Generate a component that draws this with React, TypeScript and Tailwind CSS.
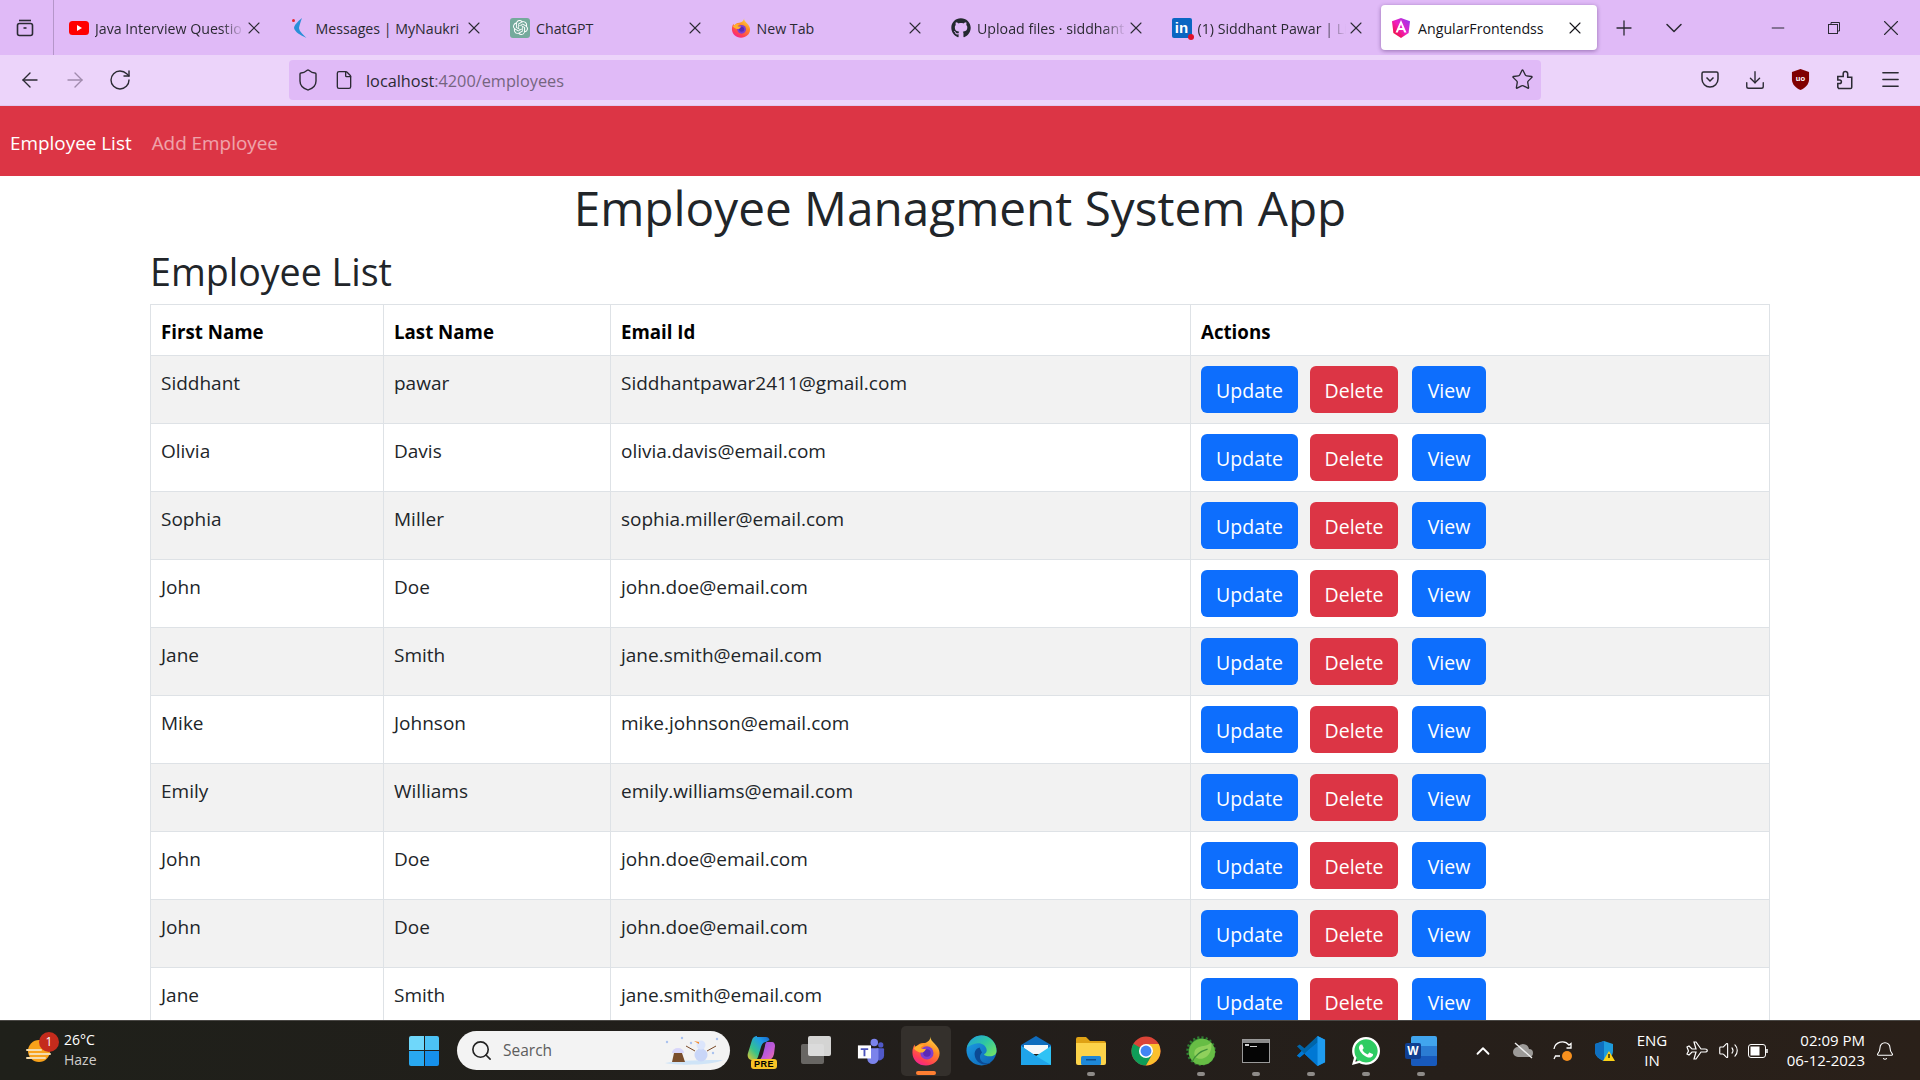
import { useId } from "react";
import {
  ArrowLeft,
  ArrowRight,
  ChevronDown,
  ChevronUp,
  Bell,
  Download,
  Menu,
  Minus,
  Plus,
  RotateCw,
  Search,
  Shield,
  Star,
  Volume2,
  X,
  File,
} from "lucide-react";
import { FaGithub, FaWhatsapp } from "react-icons/fa";
import { SiOpenai } from "react-icons/si";

const employees = [
  ["Siddhant", "pawar", "Siddhantpawar2411@gmail.com"],
  ["Olivia", "Davis", "olivia.davis@email.com"],
  ["Sophia", "Miller", "sophia.miller@email.com"],
  ["John", "Doe", "john.doe@email.com"],
  ["Jane", "Smith", "jane.smith@email.com"],
  ["Mike", "Johnson", "mike.johnson@email.com"],
  ["Emily", "Williams", "emily.williams@email.com"],
  ["John", "Doe", "john.doe@email.com"],
  ["John", "Doe", "john.doe@email.com"],
  ["Jane", "Smith", "jane.smith@email.com"],
];

function Firefox({ size = 20 }: { size?: number }) {
  const id = useId();
  return (
    <svg width={size} height={size} viewBox="0 0 32 32">
      <defs>
        <linearGradient id={id} x1="0.8" y1="0" x2="0.25" y2="1">
          <stop offset="0" stopColor="#ffe04a" />
          <stop offset="0.4" stopColor="#ff8a26" />
          <stop offset="0.8" stopColor="#ff3d56" />
          <stop offset="1" stopColor="#f0209a" />
        </linearGradient>
      </defs>
      <path
        d="M21 .5c-.5 3 1.500 5 4 7.500 3.500 3.500 5.500 6.500 5.500 10.500C30.500 26 24 31.500 16 31.500S1.500 25.500 1.500 17.500c0-3.500 1-6.500 2.500-8.500 0 1.500.5 2.500 1.500 3.500C7 9 10 7.500 13 7.500c4 0 7.500-2.500 8-7z"
        fill={`url(#${id})`}
      />
      <circle cx="17" cy="18" r="7" fill="#7d3fd1" />
      <circle cx="17" cy="18" r="4" fill="#5a2ab5" />
      <path d="M3 13c2.500-3 7-4.500 11-3.500-2 .8-3.500 2-3.500 3.500 1.500.8 3.500 1 5.500.5-1.500 4-5 5-8 3.500-2-1-4-2-5-4z" fill="#ffb02e" />
    </svg>
  );
}

function YouTubeIcon() {
  return (
    <svg width="20" height="20" viewBox="0 0 20 20">
      <rect x="0" y="3" width="20" height="14" rx="3.5" fill="#f00" />
      <path d="M8 7l5 3-5 3z" fill="#fff" />
    </svg>
  );
}

function NaukriIcon() {
  return (
    <svg width="20" height="20" viewBox="0 0 20 20">
      <circle cx="3.500" cy="2.500" r="1.500" fill="#e8262b" />
      <path d="M12 0C7 4 4.500 7 4 10c1 4 6 7 12.500 10C11.500 15 9.500 13 9 10c.5-3 1.500-6 3-10z" fill="#2a8fd8" />
    </svg>
  );
}

function ChatGptIcon() {
  return (
    <span className="flex h-5 w-5 items-center justify-center rounded-[3px] bg-[#74aa9c]">
      <SiOpenai size={15} color="#fff" />
    </span>
  );
}

function LinkedInIcon() {
  return (
    <span className="relative flex h-5 w-5 items-center justify-center rounded-[2px] bg-[#0a66c2] font-['Liberation_Sans',sans-serif] text-[15px] leading-none font-bold text-white">
      in
      <span className="absolute -right-[2px] -bottom-[2px] h-[6px] w-[6px] rounded-full bg-[#e0102a]" />
    </span>
  );
}

function AngularIcon() {
  const id = useId();
  return (
    <svg width="20" height="20" viewBox="0 0 20 20">
      <defs>
        <linearGradient id={id} x1="0" y1="1" x2="1" y2="0">
          <stop offset="0" stopColor="#f0060b" />
          <stop offset="0.5" stopColor="#f020c0" />
          <stop offset="1" stopColor="#8a3cf4" />
        </linearGradient>
      </defs>
      <path d="M10 0l9 3.200-1.400 11.800L10 20l-7.600-5L1 3.200z" fill={`url(#${id})`} />
      <path
        fillRule="evenodd"
        d="M10 2L4.500 14.500h2.300l1-2.500h4.400l1 2.500h2.300zM10 6.500l1.400 3.500H8.600z"
        fill="#fff"
      />
    </svg>
  );
}

const tabs = [
  { title: "Java Interview Questio", icon: <YouTubeIcon />, fade: true },
  { title: "Messages | MyNaukri", icon: <NaukriIcon /> },
  { title: "ChatGPT", icon: <ChatGptIcon /> },
  { title: "New Tab", icon: <Firefox /> },
  { title: "Upload files · siddhant", icon: <FaGithub size={20} color="#24292f" />, fade: true },
  { title: "(1) Siddhant Pawar | Li", icon: <LinkedInIcon />, fade: true },
];

function BrowserTab({ title, icon, fade }: { title: string; icon: React.ReactNode; fade?: boolean }) {
  return (
    <div className="flex h-[55px] w-[220.5px] shrink-0 items-center pr-[12px] pl-[14px]">
      <span className="flex h-5 w-5 shrink-0 items-center justify-center">{icon}</span>
      <span
        className={
          fade
            ? "ml-[6px] min-w-0 flex-1 overflow-hidden pt-[2px] text-[14.2px] whitespace-nowrap text-[#2b2a33] [mask-image:linear-gradient(to_right,black_85%,transparent)]"
            : "ml-[6px] min-w-0 flex-1 overflow-hidden pt-[2px] text-[14.2px] whitespace-nowrap text-[#2b2a33]"
        }
      >
        {title}
      </span>
      <X size={20} strokeWidth={1.3} className="shrink-0 text-[#2b2a33]" />
    </div>
  );
}

function TabBar() {
  return (
    <div className="flex h-[55px] items-center bg-[#e0baf7]">
      <div className="mr-[1px] flex h-full w-[54px] shrink-0 items-center justify-center border-r border-[#b596c9] pr-[3px]">
        <svg width="20" height="20" viewBox="0 0 20 20" fill="none" stroke="#2b2a33" strokeWidth="1.6">
          <path d="M4 2.500h12" />
          <rect x="2.500" y="5.500" width="15" height="12" rx="2" />
          <path d="M8.500 10h3" />
        </svg>
      </div>
      {tabs.map((tab) => (
        <BrowserTab key={tab.title} {...tab} />
      ))}
      <div className="ml-[3px] flex h-[45px] w-[216px] shrink-0 items-center rounded-[4px] bg-white pr-[12px] pl-[10px] shadow-[0_1px_4px_rgba(60,20,90,0.45)]">
        <AngularIcon />
        <span className="ml-[7px] flex-1 pt-[2px] text-[14.2px] whitespace-nowrap text-[#15141a]">AngularFrontendss</span>
        <X size={20} strokeWidth={1.3} className="text-[#15141a]" />
      </div>
      <Plus size={24} strokeWidth={1.3} className="ml-[15px] shrink-0 text-[#2b2a33]" />
      <ChevronDown size={28} strokeWidth={1.3} className="ml-[24px] shrink-0 text-[#2b2a33]" />
      <div className="ml-auto flex items-center pr-[16px] text-[#2b2a33]">
        <Minus size={20} strokeWidth={1.2} className="mr-[40px]" />
        <svg width="12" height="12" viewBox="0 0 12 12" fill="none" stroke="#2b2a33" className="mr-[38px]">
          <rect x="0.500" y="2.500" width="9" height="9" />
          <path d="M3 2.500V.5h8.500V9h-2" />
        </svg>
        <X size={26} strokeWidth={1} />
      </div>
    </div>
  );
}

function ToolBar() {
  return (
    <div className="flex h-[51px] items-center border-b border-[#e0c8ef] bg-[#ecd4fa] pb-[1px] pl-[18px] text-[#2b2a33]">
      <ArrowLeft size={24} strokeWidth={1.4} />
      <ArrowRight size={24} strokeWidth={1.4} className="ml-[21px] text-[#a08bad]" />
      <RotateCw size={24} strokeWidth={1.4} className="ml-[21px]" />
      <div className="ml-[157px] flex h-[40px] w-[1252px] items-center rounded-[4px] bg-[#e0baf7] pr-[7px] pl-[7px]">
        <Shield size={24} strokeWidth={1.4} />
        <File size={20} strokeWidth={1.6} className="ml-[14px]" />
        <span className="ml-[12px] flex-1 pt-[3px] text-[16.3px]">
          localhost<span className="text-[#75657f]">:4200/employees</span>
        </span>
        <Star size={23} strokeWidth={1.4} />
      </div>
      <div className="ml-[146.5px] flex items-center">
        <span className="flex w-[45px] justify-center">
          <svg width="18" height="17" viewBox="0 0 18 17" fill="none" stroke="#2b2a33" strokeWidth="1.5">
            <path d="M2.500 1h13A1.500 1.500 0 0 1 17 2.500V8A8 8 0 0 1 1 8V2.500A1.500 1.500 0 0 1 2.500 1z" />
            <path d="M5.500 6.500L9 10l3.500-3.500" />
          </svg>
        </span>
        <span className="flex w-[45px] justify-center">
          <Download size={22} strokeWidth={1.5} />
        </span>
        <span className="flex w-[45px] justify-center">
          <svg width="19" height="21" viewBox="0 0 20 22">
            <path d="M10 0l9 3v8c0 5-4 9-9 11-5-2-9-6-9-11V3z" fill="#800000" />
            <text x="10" y="13" textAnchor="middle" fontSize="8" fontWeight="700" fill="#fff" fontFamily="Liberation Sans">uo</text>
          </svg>
        </span>
        <span className="flex w-[45px] justify-center">
          <svg width="18" height="20" viewBox="0 0 20 22" fill="none" stroke="#2b2a33" strokeWidth="1.7">
            <path d="M3 20.500h13a1.500 1.500 0 0 0 1.500-1.500V8H13V4a2.500 2.500 0 0 0-5 0v3H2v4h2a2 2 0 0 1 0 4H2v4z" />
          </svg>
        </span>
        <span className="flex w-[45px] justify-center">
          <Menu size={23} strokeWidth={1.4} />
        </span>
      </div>
    </div>
  );
}

function EmployeeTable() {
  return (
    <table className="w-[1620px] table-fixed border-collapse text-[19px] leading-[30px] text-[#212529]">
      <colgroup>
        <col className="w-[233px]" />
        <col className="w-[227px]" />
        <col className="w-[580px]" />
        <col />
      </colgroup>
      <thead>
        <tr className="h-[51px] text-left text-black">
          {["First Name", "Last Name", "Email Id", "Actions"].map((label) => (
            <th key={label} className="border border-[#dee2e6] px-[10px] pt-[11px] pb-[8px] text-[18.700px] font-bold">
              {label}
            </th>
          ))}
        </tr>
      </thead>
      <tbody>
        {employees.map((row, i) => (
          <tr key={i} className={i % 2 === 0 ? "h-[68px] bg-[#f2f2f2]" : "h-[68px] bg-white"}>
            {row.map((cell, j) => (
              <td key={j} className="border border-[#dee2e6] px-[10px] pt-[12px] pb-[8px] align-top">
                {cell}
              </td>
            ))}
            <td className="border border-[#dee2e6] px-[10px] py-[10px] align-top">
              <div className="flex gap-[12px] text-[19.500px] text-white">
                <button className="h-[47px] w-[97px] rounded-[6px] bg-[#0d6efd] pt-[2px]">Update</button>
                <button className="h-[47px] w-[88px] rounded-[6px] bg-[#dc3545] pt-[2px]">Delete</button>
                <button className="ml-[2px] h-[47px] w-[74px] rounded-[6px] bg-[#0d6efd] pt-[2px]">View</button>
              </div>
            </td>
          </tr>
        ))}
      </tbody>
    </table>
  );
}

function TaskIcon({ children, dot, active }: { children: React.ReactNode; dot?: boolean; active?: boolean }) {
  return (
    <div
      className={
        active
          ? "relative flex h-[50px] w-[50px] items-center justify-center rounded-[5px] bg-[#34302c]"
          : "relative flex h-[50px] w-[50px] items-center justify-center"
      }
    >
      {children}
      {dot && <span className="absolute bottom-[0px] h-[4px] w-[8px] rounded-full bg-[#8e8b88]" />}
      {active && <span className="absolute bottom-[1px] h-[4px] w-[20px] rounded-full bg-[#ff7f32]" />}
    </div>
  );
}

function WindowsLogo() {
  return (
    <div className="grid h-[30px] w-[30px] grid-cols-2 gap-[1px]">
      <span className="rounded-tl-[2px] bg-[#6fd7fa]" />
      <span className="rounded-tr-[2px] bg-[#4cc2f5]" />
      <span className="rounded-bl-[2px] bg-[#29a8f0]" />
      <span className="rounded-br-[2px] bg-[#1690ea]" />
    </div>
  );
}

function Copilot() {
  const id = useId();
  const id2 = useId();
  return (
    <span className="relative block h-[30px] w-[30px]">
      <svg width="30" height="24" viewBox="0 0 30 24">
        <defs>
          <linearGradient id={id} x1="0" y1="1" x2="1" y2="0">
            <stop offset="0" stopColor="#e6c72e" />
            <stop offset="0.35" stopColor="#35c28c" />
            <stop offset="0.7" stopColor="#1f9be8" />
            <stop offset="1" stopColor="#1763c9" />
          </linearGradient>
          <linearGradient id={id2} x1="0" y1="0" x2="1" y2="1">
            <stop offset="0" stopColor="#8c52e0" />
            <stop offset="0.6" stopColor="#c45bd6" />
            <stop offset="1" stopColor="#f2739c" />
          </linearGradient>
        </defs>
        <path d="M11 1h9c2 0 3 1 3.500 3L20 6c-3 0-4 2-5 5l-3 10c-.5 2-2 3-4 3H5c-3-1-4-4-3-7l4-13c1-3 3-4 5-4z" fill={`url(#${id})`} />
        <path d="M21 6h5c2 0 3 2 3 4l-1 8c-1 4-3 6-6 6h-9c2-1 3-3 4-6l2-8c0-2 1-4 2-4z" fill={`url(#${id2})`} />
      </svg>
      <span className="absolute right-[-1px] bottom-[-3px] rounded-[3px] bg-[#f7c325] px-[3px] font-['Liberation_Sans',sans-serif] text-[9px] leading-[10px] font-bold tracking-[0.5px] text-black">
        PRE
      </span>
    </span>
  );
}

function TaskView() {
  return (
    <span className="relative block h-[30px] w-[30px]">
      <span className="absolute top-[8px] left-0 h-[20px] w-[23px] rounded-[2px] bg-[#686663]" />
      <span className="absolute top-0 right-0 h-[20px] w-[23px] rounded-[2px] bg-[#e8e8e8]/90" />
    </span>
  );
}

function Teams() {
  return (
    <svg width="28" height="28" viewBox="0 0 30 30">
      <circle cx="18.500" cy="6" r="4" fill="#7b83eb" />
      <circle cx="25.500" cy="8.500" r="2.800" fill="#5059c9" />
      <path d="M21 12h7a1 1 0 0 1 1 1v7a5 5 0 0 1-8 4z" fill="#5059c9" />
      <path d="M10 12h13v11a6 6 0 0 1-12 0z" fill="#7b83eb" />
      <rect x="1" y="9" width="14" height="14" fill="#fff" />
      <path d="M4 12h8v2H9v6.500H7V14H4z" fill="#4b53bc" />
    </svg>
  );
}

function Edge() {
  const id = useId();
  const id2 = useId();
  return (
    <svg width="31" height="31" viewBox="0 0 32 32">
      <defs>
        <linearGradient id={id} x1="0" y1="0" x2="1" y2="0.800">
          <stop offset="0" stopColor="#1f9ce0" />
          <stop offset="0.55" stopColor="#2fc8a0" />
          <stop offset="1" stopColor="#6ee06a" />
        </linearGradient>
        <linearGradient id={id2} x1="0" y1="0" x2="1" y2="1">
          <stop offset="0" stopColor="#1da1e8" />
          <stop offset="1" stopColor="#0d5fb0" />
        </linearGradient>
      </defs>
      <circle cx="16" cy="16" r="15.500" fill={`url(#${id2})`} />
      <path d="M1 13C3 5 10 .5 16 .5 25 .5 31.500 8 31.500 16.500c0 3.500-3 5.500-7 5.500-3 0-5.500-1-6-2 2.500-1 3.500-3.500 2.500-6-1-3.500-5-6-9-5.500C8 9 4 10.500 1 13z" fill={`url(#${id})`} />
      <path d="M14 13c-3.500 1-5.500 4-5 8 .5 5 5 9.500 11 9.500 2 0 4-.5 5.500-1.500-5 1-10-.5-11-5-.5-2.500.5-4.500 2-6-1-2-2-3.500-2.500-5z" fill="#0c4a94" />
    </svg>
  );
}

function Mail() {
  return (
    <svg width="30" height="29" viewBox="0 0 30 29">
      <path d="M0 9L15 0l15 9v5H0z" fill="#0f6cbd" />
      <path d="M3 9h24v9H3z" fill="#f5f7fa" />
      <path d="M0 10l15 10 15-10v19H0z" fill="#2fc2f5" />
      <path d="M0 29V10l15 10 15 9z" fill="#1fa4ea" />
    </svg>
  );
}

function Folder() {
  return (
    <svg width="30" height="28" viewBox="0 0 30 28">
      <path d="M0 2a2 2 0 0 1 2-2h8l4 4h14a2 2 0 0 1 2 2v4H0z" fill="#dfa215" />
      <path d="M0 6h30v20a2 2 0 0 1-2 2H2a2 2 0 0 1-2-2z" fill="#fcd34a" />
      <rect x="5" y="19" width="20" height="9" rx="1.500" fill="#1e88d8" />
      <rect x="10" y="22" width="10" height="1.500" fill="#0d4f8f" />
    </svg>
  );
}

function Chrome() {
  return (
    <svg width="30" height="30" viewBox="0 0 32 32">
      <circle cx="16" cy="16" r="15.500" fill="#db4437" />
      <path d="M16 16L2.600 8.200A15.500 15.500 0 0 0 16 31.500l7.800-13.500z" fill="#0f9d58" />
      <path d="M16 8.500h13.500A15.500 15.500 0 0 1 16 31.500L23.500 18z" fill="#fbc02d" />
      <circle cx="16" cy="16" r="7.500" fill="#fff" />
      <circle cx="16" cy="16" r="5.800" fill="#4285f4" />
    </svg>
  );
}

function SpringLeaf() {
  return (
    <svg width="30" height="30" viewBox="0 0 32 32">
      <circle cx="16" cy="16" r="13.500" fill="#2f7d32" />
      <circle cx="16" cy="16" r="14" fill="none" stroke="#2f7d32" strokeWidth="3.500" strokeDasharray="2.200 2.200" />
      <circle cx="17" cy="17" r="14" fill="#67bd45" />
      <path d="M27 7c1 8-2 15-9 17-6 1.500-10-2-9-7 1-5 7-6 11-6.500 3-.5 5-2 7-3.500z" fill="#8fd05c" />
      <path d="M7 27c3-7 9-11 16-13" stroke="#3f8f3a" strokeWidth="1.200" fill="none" />
    </svg>
  );
}

function Cmd() {
  return (
    <span className="block h-[24px] w-[28px] border border-[#9a9a9a] bg-[#050505]">
      <span className="block h-[3px] bg-[#8a8a8a]" />
      <span className="mt-[1px] ml-[2px] block h-[2px] w-[4px] bg-[#cfcfcf]" />
      <span className="mt-[0px] ml-[7px] block h-[1px] w-[7px] bg-[#cfcfcf]" />
    </span>
  );
}

function VsCode() {
  return (
    <svg width="30" height="30" viewBox="0 0 30 32">
      <path d="M22 0l8 4v24l-8 4-14-13z" fill="#0a7fd1" />
      <path d="M22 0L8 13 3 9 0 11l5 5-5 5 3 2 19-16z" fill="#0065a9" />
      <path d="M22 7L3 23l-3-2 5-5 17 16z" fill="#0078d4" />
      <path d="M22 0l8 4v24l-8 4z" fill="#1f9cf0" />
    </svg>
  );
}

function WhatsApp() {
  return (
    <span className="relative flex h-[32px] w-[32px] items-center justify-center">
      <span className="absolute h-[26px] w-[26px] rounded-full bg-[#2ecc62]" />
      <FaWhatsapp size={32} color="#fff" className="relative" />
    </span>
  );
}

function Word() {
  return (
    <span className="relative block h-[30px] w-[32px]">
      <span className="absolute top-0 right-0 grid h-[30px] w-[26px] grid-rows-3 overflow-hidden rounded-[2px]">
        <span className="bg-[#41a5ee]" />
        <span className="bg-[#2b7cd3]" />
        <span className="bg-[#185abd]" />
      </span>
      <span className="absolute top-[7px] left-0 flex h-[16px] w-[16px] items-center justify-center rounded-[2px] bg-[#103f91] font-['Liberation_Sans',sans-serif] text-[12px] font-bold text-white">
        W
      </span>
    </span>
  );
}

function Taskbar() {
  return (
    <div className="relative flex h-[60px] shrink-0 items-center border-t border-[#4a4845] bg-gradient-to-r from-[#1f201a] via-[#221e1b] to-[#2a2019] text-white">
      <div className="flex w-[409px] shrink-0 items-center pl-[26px]">
        <div className="relative h-[26px] w-[26px]">
          <svg width="26" height="26" viewBox="0 0 26 26">
            <circle cx="13" cy="13" r="11" fill="#f9a21a" />
            <path d="M1 12h14M4 16h20M1 20h18" stroke="#f4dcae" strokeWidth="2" strokeLinecap="round" />
          </svg>
          <span className="absolute -top-[6px] left-[13px] flex h-[20px] w-[20px] items-center justify-center rounded-full bg-[#c42b1c] text-[12px]">
            1
          </span>
        </div>
        <div className="ml-[12px] pb-[2px] text-[14px] leading-[20px]">
          <div>26°C</div>
          <div className="text-[#cfcdcb]">Haze</div>
        </div>
      </div>
      <div className="flex h-full items-center">
        <WindowsLogo />
        <div className="ml-[18px] flex h-[39px] w-[273px] items-center rounded-full bg-[#f3f3f3] pl-[13px] text-[#5d5d5d]">
          <Search size={23} strokeWidth={1.7} className="text-[#222]" />
          <span className="ml-[10px] flex-1 text-[15.500px]">Search</span>
          <svg width="62" height="34" viewBox="0 0 62 34" className="mr-[5px]">
            <path d="M2 29c15-3 42-3 58-3-8 5-44 6-58 3z" fill="#cfe4f7" />
            <path d="M9 28l2-9h8l3 9z" fill="#7a4e2c" />
            <path d="M9 19a6 5 0 0 1 12 0z" fill="#d8d6fa" />
            <circle cx="38" cy="21" r="6.500" fill="#c9d6f8" />
            <circle cx="38" cy="11" r="4.500" fill="#dce5fb" />
            <path d="M36 8l-5-1 5 3z" fill="#f28a2e" />
            <path d="M32 17l-9-5M44 17l9-5" stroke="#7a4a28" strokeWidth="1" />
            <circle cx="4" cy="8" r="1.200" fill="#a9c2ef" />
            <circle cx="54" cy="5" r="1.200" fill="#a9c2ef" />
            <circle cx="19" cy="4" r="1.200" fill="#a9c2ef" />
            <circle cx="28" cy="9" r="1.200" fill="#a9c2ef" />
            <circle cx="50" cy="19" r="1.200" fill="#a9c2ef" />
          </svg>
        </div>
        <div className="ml-[6px] flex items-center gap-[5px]">
          <TaskIcon><Copilot /></TaskIcon>
          <TaskIcon><TaskView /></TaskIcon>
          <TaskIcon><Teams /></TaskIcon>
          <TaskIcon active><Firefox size={30} /></TaskIcon>
          <TaskIcon><Edge /></TaskIcon>
          <TaskIcon><Mail /></TaskIcon>
          <TaskIcon dot><Folder /></TaskIcon>
          <TaskIcon><Chrome /></TaskIcon>
          <TaskIcon dot><SpringLeaf /></TaskIcon>
          <TaskIcon dot><Cmd /></TaskIcon>
          <TaskIcon dot><VsCode /></TaskIcon>
          <TaskIcon dot><WhatsApp /></TaskIcon>
          <TaskIcon dot><Word /></TaskIcon>
        </div>
      </div>
      <div className="ml-auto flex items-center pr-[25px]">
        <ChevronUp size={22} strokeWidth={2} />
        <svg width="22" height="18" viewBox="0 0 22 18" className="ml-[18px]">
          <path d="M6 15a5 5 0 0 1 0-10 6 6 0 0 1 11 2 4 4 0 0 1 0 8z" fill="#9c9a98" />
          <path d="M3 1l17 15" stroke="#eee" strokeWidth="1.400" />
        </svg>
        <svg width="22" height="22" viewBox="0 0 22 22" fill="none" stroke="#fff" strokeWidth="1.300" className="ml-[18px]">
          <path d="M2 9a8.500 8.500 0 0 1 15-4l2-1.500V8h-4.500" />
          <path d="M2 19l1.500-3H8" />
          <circle cx="15" cy="16" r="5" fill="#f7901e" stroke="none" />
        </svg>
        <svg width="22" height="22" viewBox="0 0 22 22" className="ml-[20px]">
          <path d="M10 1l9 3v7c0 5-4 8-9 10-5-2-9-5-9-10V4z" fill="#1e9bdc" />
          <path d="M10 1v20c-5-2-9-5-9-10V4z" fill="#0f6fc0" />
          <path d="M15 11l6 10H9z" fill="#fcd116" />
          <path d="M15 14v4" stroke="#000" strokeWidth="1.200" />
        </svg>
        <div className="ml-[16px] w-[40px] pb-[2px] text-center text-[15px] leading-[20px]">
          ENG
          <br />
          IN
        </div>
        <svg width="22" height="20" viewBox="0 0 22 20" fill="none" stroke="#fff" strokeWidth="1.200" className="ml-[14px]">
          <path d="M1 6l2-1 3 3h4L8 1h2l5 7h4c3 0 3 3 0 3h-4l-5 7H8l2-7H6l-3 3-2-1 1.500-3z" />
        </svg>
        <Volume2 size={21} strokeWidth={1.3} className="ml-[10px]" />
        <svg width="20" height="14" viewBox="0 0 20 14" fill="none" stroke="#fff" className="ml-[9px]">
          <rect x="0.500" y="0.500" width="17" height="13" rx="2.500" />
          <rect x="2.500" y="2.500" width="9" height="9" fill="#fff" stroke="none" />
          <path d="M19 5v4" strokeWidth="1.500" />
        </svg>
        <div className="ml-[17px] w-[80px] pb-[2px] text-right text-[15px] leading-[20px] whitespace-nowrap">
          02:09 PM
          <br />
          06-12-2023
        </div>
        <Bell size={20} strokeWidth={1.3} className="ml-[10px]" />
      </div>
    </div>
  );
}

export default function App() {
  return (
    <div className="flex h-screen flex-col overflow-hidden bg-white font-['Open_Sans','Noto_Sans',sans-serif]">
      <TabBar />
      <ToolBar />
      <nav className="flex h-[70px] shrink-0 items-center gap-[20px] bg-[#dc3545] pt-[5px] pl-[10px] text-[18.900px]">
        <a className="text-white">Employee List</a>
        <a className="text-white/55">Add Employee</a>
      </nav>
      <main className="min-h-0 flex-1 overflow-hidden">
        <h1 className="h-[60px] text-center text-[47.700px] leading-[64px] text-[#212529]">Employee Managment System App</h1>
        <div className="mx-auto w-[1620px]">
          <h2 className="mt-[9px] mb-[11px] h-[48px] text-[37.600px] leading-[54px] text-[#212529]">Employee List</h2>
          <EmployeeTable />
        </div>
      </main>
      <Taskbar />
    </div>
  );
}
